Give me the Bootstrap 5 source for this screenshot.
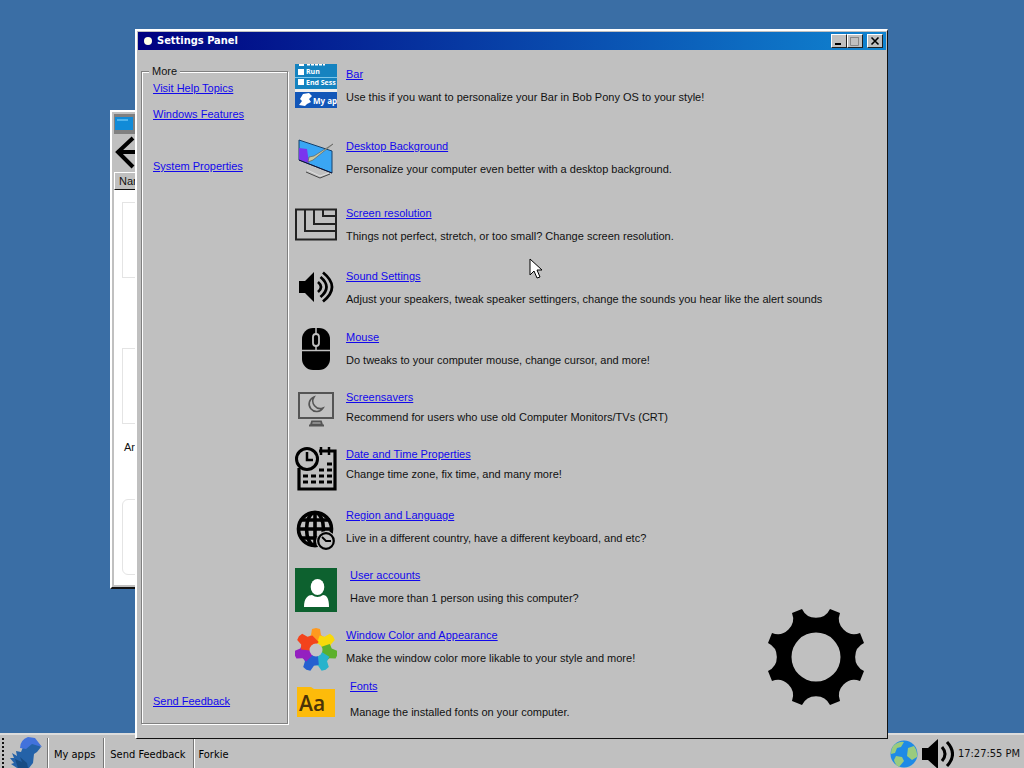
<!DOCTYPE html>
<html lang="en">
<head>
<meta charset="utf-8">
<meta name="viewport" content="width=device-width, initial-scale=1">
<title>Settings Panel</title>
<link href="https://cdn.jsdelivr.net/npm/bootstrap@5.3.0/dist/css/bootstrap.min.css" rel="stylesheet">
<script src="https://cdn.jsdelivr.net/npm/bootstrap@5.3.0/dist/js/bootstrap.bundle.min.js"></script>
<style>
  :root { --face: #c0c0c0; --link: #1208ec; }
  body { background: #3a6ea5; color: #111; font: 11px/14px "Liberation Sans", Arial, sans-serif; }
  svg { display: block; flex: none; }
  a { color: var(--link); }
  ul { list-style: none; margin: 0; padding: 0; }

  .win { position: absolute; background: var(--face); border: 2px solid; border-color: #fff #111 #111 #fff; }
  .win-files { inset: 110px auto 179px 110px; width: 220px; padding: 2px; }
  .win-settings { inset: 29px 136px 29px 135px; padding: 1px; border-width: 2px 1px 1px 2px; }

  .files-title { background: #808080; height: 20px; padding: 3px 1px; }
  .files-bar { height: 38px; }
  .files-head { border: 1px solid; border-color: #fff #111 #111 #fff; height: 18px; padding: 1px 4px; }
  .files-list { background: #fff; padding: 12px 8px 10px; display: flex; flex-direction: column; justify-content: space-between; }
  .file-thumb { border: 1px solid #e4e4e4; width: 78px; height: 76px; }
  .file-name { padding: 16px 2px 0; }

  .title-bar { height: 18px; padding: 0 3px 0 6px; background: linear-gradient(90deg, #000080, #1084d0); color: #fff; font: bold 11px/18px "DejaVu Sans Condensed", Tahoma, sans-serif; }
  .title-dot { width: 8px; height: 8px; margin-right: 5px; background: #ffffe8; border-radius: 50%; }
  .cap-btn { width: 16px; height: 14px; padding: 0; background: var(--face); border: 1px solid; border-color: #fff #222 #222 #fff; display: grid; place-items: center; }

  .panel-body { display: grid; grid-template-columns: 147px 1fr; column-gap: 7px; padding: 14px 21px 17px 3px; }
  .more-box { border: 1px solid #808080; box-shadow: 1px 1px #fff, inset 1px 1px #fff; padding: 3px 11px 14px; display: flex; flex-direction: column; }
  .more-box legend { float: none; width: auto; margin: 0 0 0 -4px; padding: 0 3px; font-size: 11px; line-height: 14px; background: var(--face); }
  .more-box ul { flex: 1; display: flex; flex-direction: column; gap: 12px; padding-bottom: 1px; }
  .link-apart { margin-top: 26px; }
  .panel-main { display: grid; }
  .panel-main > * { grid-area: 1 / 1; }
  .entries { display: grid; grid-template-rows: 72px 67px 63px 61px 60px 57px 61px 60px 60px 51px 48px; }
  .entry { display: flex; gap: 9px; align-items: flex-start; }
  .entry-text { display: flex; flex-direction: column; align-items: flex-start; gap: 9px; padding-top: 3px; }
  .gap-tight { gap: 6px; }
  .indent { padding-left: 4px; }
  .gap-loose { gap: 12px; }
  .gear { place-self: end; margin-bottom: 18px; }

  .task-bar { height: 35px; background: var(--face); border-top: 2px solid #dcdcdc; font: 11px/14px "DejaVu Sans Condensed", Tahoma, sans-serif; }
  .grip { border-left: 2px dotted #111; margin: 3px 2px 0 2px; }
  .task-btn { border: 0; border-left: 1px solid #777; box-shadow: inset 1px 0 #fff; background: none; padding: 3px 5px 0 6px; margin-top: 3px; }
  .cursor { position: absolute; left: 529px; top: 258px; }
</style>
</head>
<body class="vh-100 d-flex flex-column overflow-hidden position-relative">

<section class="win win-files d-flex flex-column overflow-hidden" aria-label="Files">
  <div class="files-title">
    <svg width="18" height="14" viewBox="0 0 18 14"><rect width="18" height="13" fill="#118bd8"/><path d="M2 3h11" stroke="#8fdcff"/></svg>
  </div>
  <div class="files-bar">
    <svg width="40" height="38" viewBox="0 0 40 38"><path d="M19 4L4 18l15 15M4 18h34" fill="none" stroke="#000" stroke-width="4"/></svg>
  </div>
  <div class="files-head">Name</div>
  <div class="files-list flex-fill">
    <div class="file-thumb"></div>
    <div class="pt-4">
      <div class="file-thumb"></div>
      <div class="file-name">Ar</div>
    </div>
    <div class="file-thumb rounded"></div>
  </div>
</section>

<section class="win win-settings d-flex flex-column" aria-label="Settings Panel">
  <header class="title-bar d-flex align-items-center">
    <span class="title-dot"></span>
    <span class="me-auto">Settings Panel</span>
    <button class="cap-btn" aria-label="Minimize"><svg width="10" height="10"><path d="M1 8h6" stroke="#000" stroke-width="2"/></svg></button>
    <button class="cap-btn me-1" aria-label="Maximize"><svg width="10" height="10"><path d="M.5 1.500h8v8h-8zM0 1.500h9" fill="none" stroke="#888"/></svg></button>
    <button class="cap-btn" aria-label="Close"><svg width="10" height="10"><path d="M1.500 1.500l7 7M8.500 1.500l-7 7" stroke="#000" stroke-width="1.600"/></svg></button>
  </header>

  <div class="panel-body flex-fill">
    <fieldset class="more-box">
      <legend>More</legend>
      <ul class="h-100">
        <li><a href="#">Visit Help Topics</a></li>
        <li><a href="#">Windows Features</a></li>
        <li class="link-apart"><a href="#">System Properties</a></li>
        <li class="mt-auto"><a href="#">Send Feedback</a></li>
      </ul>
    </fieldset>

    <main class="panel-main">
      <ul class="entries">
        <li class="entry">
          <svg width="42" height="48" viewBox="0 0 42 48">
            <rect width="42" height="44" fill="#1583c0"/><path d="M0 13.500h42" stroke="#7cc6ea"/><path d="M0 26.500h42" stroke="#eee" stroke-width="3"/><rect y="28" width="42" height="16" fill="#1256b8"/>
            <path d="M3 5h6v6H3zM3 15h6v6H3zM4 0h5v2H4z" fill="#fff"/><path d="M12 .8h18" stroke="#fff" stroke-width="1.600" stroke-dasharray="3 1"/>
            <path d="M4 41l3-4-2-2 3-5 6-1 3 3-3 3 2 3-4 2-2 2z" fill="#fff"/>
            <g fill="#fff" font-family="Open Sans, sans-serif" font-weight="bold"><text x="11" y="10" font-size="7">Run</text><text x="11" y="21" font-size="7">End Sess</text><text x="18" y="40" font-size="8">My ap</text></g>
          </svg>
          <div class="entry-text"><a href="#">Bar</a><span>Use this if you want to personalize your Bar in Bob Pony OS to your style!</span></div>
        </li>
        <li class="entry">
          <svg width="42" height="48" viewBox="0 0 42 48">
            <path d="M4 4l33 11v22L4 24z" fill="#3aa6f4" stroke="#16406a"/><path d="M4 12l8 1 2 14-10-3z" fill="#7a35ee"/><path d="M14 21l5-1 19-12-20 16-5 2z" fill="#c8c8a0" stroke="#555" stroke-width=".6"/><path d="M4 24l33 13" stroke="#113"/><path d="M11 36l14 6 10-4" fill="none" stroke="#444"/><path d="M12 34l13 6 9-3" fill="none" stroke="#ddd"/>
          </svg>
          <div class="entry-text"><a href="#">Desktop Background</a><span>Personalize your computer even better with a desktop background.</span></div>
        </li>
        <li class="entry">
          <svg width="42" height="48" viewBox="0 0 42 48"><path d="M1 6.500h40v30H1zM10 7v21h31M19 7v14h22M28 7v6h13" fill="none" stroke="#222" stroke-width="2"/></svg>
          <div class="entry-text"><a href="#">Screen resolution</a><span>Things not perfect, stretch, or too small? Change screen resolution.</span></div>
        </li>
        <li class="entry">
          <svg width="42" height="48" viewBox="0 0 42 48"><path d="M4 15h6l9-9v30l-9-9H4z" fill="#000"/><path d="M23 16q6 5 0 10M25.500 11q12 10 0 20M28 6.500q18 14.500 0 29" fill="none" stroke="#000" stroke-width="2.800"/></svg>
          <div class="entry-text"><a href="#">Sound Settings</a><span>Adjust your speakers, tweak speaker settingers, change the sounds you hear like the alert sounds</span></div>
        </li>
        <li class="entry">
          <svg width="42" height="48" viewBox="0 0 42 48"><rect x="7" y="1" width="28" height="42" rx="11" fill="#000"/><path d="M7 23.500h28M21 1v6M21 19v4" stroke="#c0c0c0" stroke-width="1.500"/><rect x="18" y="7" width="6" height="12" rx="3" fill="#000" stroke="#c0c0c0" stroke-width="1.800"/></svg>
          <div class="entry-text"><a href="#">Mouse</a><span>Do tweaks to your computer mouse, change cursor, and more!</span></div>
        </li>
        <li class="entry">
          <svg width="42" height="48" viewBox="0 0 42 48"><rect x="4" y="6" width="34" height="25" fill="none" stroke="#555" stroke-width="2"/><path d="M19 10a7.500 7.500 0 1 0 9 11a7.500 7.500 0 0 1-9-11z" fill="none" stroke="#555" stroke-width="1.600"/><path d="M17 34.500h9l1 3H16zM14 38.500h15" fill="none" stroke="#555" stroke-width="1.800"/></svg>
          <div class="entry-text gap-tight"><a href="#">Screensavers</a><span>Recommend for users who use old Computer Monitors/TVs (CRT)</span></div>
        </li>
        <li class="entry">
          <svg width="42" height="48" viewBox="0 0 42 48"><path d="M24 7h16v38H4V24" fill="none" stroke="#000" stroke-width="3.200"/><path d="M26 3v8M34 3v8" stroke="#000" stroke-width="2.500"/><circle cx="12" cy="15" r="10.500" fill="#c0c0c0" stroke="#000" stroke-width="3"/><path d="M12 8v8h6" fill="none" stroke="#000" stroke-width="2.500"/><path d="M24 26h5M32 26h5M32 20h5M8 32h5M16 32h5M24 32h5M32 32h5M8 38h5M16 38h5M24 38h5M32 38h5" stroke="#000" stroke-width="3"/></svg>
          <div class="entry-text gap-tight"><a href="#">Date and Time Properties</a><span>Change time zone, fix time, and many more!</span></div>
        </li>
        <li class="entry">
          <svg width="42" height="48" viewBox="0 0 42 48"><g fill="none" stroke="#000" stroke-width="3.600"><circle cx="20" cy="24" r="16.500"/><ellipse cx="20" cy="24" rx="8.500" ry="16.500"/><path d="M20 7v34M3 24h34M6 15h29M6 33h29"/></g><circle cx="31" cy="36" r="10" fill="#c0c0c0"/><circle cx="31" cy="36" r="7.800" fill="none" stroke="#000" stroke-width="2.200"/><path d="M27 32l4 4h5" fill="none" stroke="#000" stroke-width="1.800"/></svg>
          <div class="entry-text"><a href="#">Region and Language</a><span>Live in a different country, have a different keyboard, and etc?</span></div>
        </li>
        <li class="entry">
          <svg width="42" height="48" viewBox="0 0 42 48"><rect y="3" width="42" height="44" fill="#0d612f"/><ellipse cx="22.500" cy="22" rx="6.800" ry="8" fill="#fff"/><path d="M9 42c0-9 4-12 8-12q5.500 4 11 0c4 0 6 4 6 12z" fill="#fff"/></svg>
          <div class="entry-text indent"><a href="#">User accounts</a><span>Have more than 1 person using this computer?</span></div>
        </li>
        <li class="entry">
          <svg width="42" height="48" viewBox="0 0 42 48">
            <defs><path id="lobe" d="M-4-4L-9-12L-5-15L-4-21L0-22L4-21L5-15L9-12L8-3z" stroke-linejoin="round"/></defs>
            <g transform="translate(21 25)"><use href="#lobe" fill="#ff9a1f"/><use href="#lobe" fill="#f8d90c" transform="rotate(51)"/><use href="#lobe" fill="#5cb02c" transform="rotate(103)"/><use href="#lobe" fill="#28b3cc" transform="rotate(154)"/><use href="#lobe" fill="#2560d0" transform="rotate(206)"/><use href="#lobe" fill="#9420c0" transform="rotate(257)"/><use href="#lobe" fill="#f3431c" transform="rotate(309)"/><circle r="6.500" fill="#c4c4c8"/></g>
          </svg>
          <div class="entry-text"><a href="#">Window Color and Appearance</a><span>Make the window color more likable to your style and more!</span></div>
        </li>
        <li class="entry">
          <svg width="42" height="48" viewBox="0 0 42 48"><path d="M2 11h14l3 2h21v28H2z" fill="#fdbb0a"/><text x="4" y="35" font-family="Open Sans, sans-serif" font-size="21" font-weight="600" fill="#4a3208">Aa</text></svg>
          <div class="entry-text indent gap-loose"><a href="#">Fonts</a><span>Manage the installed fonts on your computer.</span></div>
        </li>
      </ul>
      <svg class="gear" width="98" height="98" viewBox="-49 -49 98 98"><path fill-rule="evenodd" d="M-14-48A15.500 15.500 0 0 0 14-48L24-44A15.500 15.500 0 0 0 44-24L48-14A15.500 15.500 0 0 0 48 14L44 24A15.500 15.500 0 0 0 24 44L14 48A15.500 15.500 0 0 0-14 48L-24 44A15.500 15.500 0 0 0-44 24L-48 14A15.500 15.500 0 0 0-48-14L-44-24A15.500 15.500 0 0 0-24-44zM0-24.500A24.500 24.500 0 1 0 0 24.500A24.500 24.500 0 1 0 0-24.500z"/></svg>
    </main>
  </div>
</section>

<footer class="task-bar mt-auto d-flex">
  <span class="grip"></span>
  <svg class="mx-1" width="33" height="33" viewBox="0 0 33 33"><path d="M7 33l-6-4 3-1-4-5 4 0-2-5 5 3-1-5 5 1 2-5q-2-5 3-7l9 1 6 6-4 5-3 2-1 9-4 5z" fill="#2462a8"/><path d="M10 13q0-8 8-11l7 1 7 9-10-3-6 5z" fill="#4272dc"/><path d="M5 24l7 3-2-5 7 6 1 5H8z" fill="#174c84"/></svg>
  <button class="task-btn pe-2">My apps</button>
  <button class="task-btn pe-2">Send Feedback</button>
  <button class="task-btn ps-1">Forkie</button>
  <div class="ms-auto d-flex align-items-center pe-1 pt-1">
    <svg width="28" height="28" viewBox="0 0 28 28"><circle cx="14" cy="14" r="13.500" fill="#1e8ae6"/><path d="M3 6q6-5 11-4l-3 5-4 1-2 5-4 1q0-5 2-8zM6 16l6 1 2 4-5 6q-4-2-5-7zM18 8l6-2q4 5 3 11l-5 3-5-4z" fill="#9acb7e"/></svg>
    <svg class="me-1" width="36" height="32" viewBox="0 0 36 32"><path d="M4 10h6L20 1v30l-10-9H4z"/><path d="M24 9q6 7 0 14M29 4q11 12 0 24" fill="none" stroke="#000" stroke-width="3"/></svg>
    <span>17:27:55 PM</span>
  </div>
</footer>

<svg class="cursor" width="14" height="22" viewBox="0 0 14 22"><path d="M1 1v16l4-4 3 7 3-1-3-7h5z" fill="#fff" stroke="#000"/></svg>
</body>
</html>
